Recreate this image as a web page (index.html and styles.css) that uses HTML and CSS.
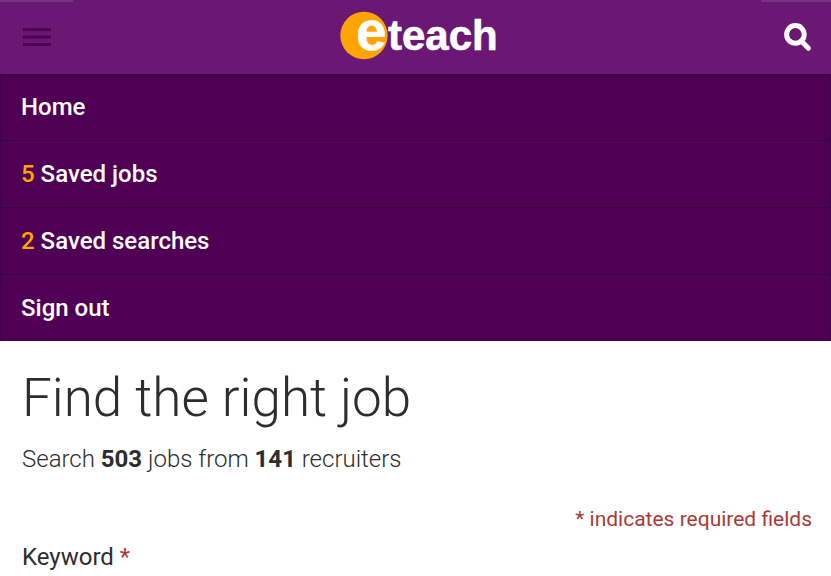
FILE: index.html
```html
<!DOCTYPE html>
<html lang="en">
<head>
<meta charset="utf-8">
<meta name="viewport" content="width=device-width, initial-scale=1">
<title>eteach</title>
<link rel="stylesheet" href="styles.css">
</head>
<body>
<header class="topbar">
  <button class="icon-button" type="button" aria-label="Menu" aria-expanded="true">
    <svg class="menu-icon" width="28" height="18" viewBox="0 0 28 18" aria-hidden="true">
      <path d="M0 1.5h28M0 9h28M0 16.5h28"/>
    </svg>
  </button>
  <a class="logo" href="#" aria-label="eteach">
    <svg width="162" height="74" viewBox="0 0 162 74" aria-hidden="true">
      <circle cx="27" cy="35.5" r="23.7"/>
      <text class="logo-e" x="19" y="50">e</text>
      <text class="logo-rest" x="51" y="50">teach</text>
    </svg>
  </a>
  <button class="icon-button" type="button" aria-label="Search">
    <svg class="search-icon" width="28" height="29" viewBox="0 0 28 29" aria-hidden="true">
      <circle cx="11.4" cy="11.4" r="8.8"/>
      <path d="M17.6 18.2l6.8 7"/>
    </svg>
  </button>
</header>
<nav class="menu">
  <ul>
    <li><a href="#">Home</a></li>
    <li><a href="#"><span class="count">5</span> Saved jobs</a></li>
    <li><a href="#"><span class="count">2</span> Saved searches</a></li>
    <li><a href="#">Sign out</a></li>
  </ul>
</nav>
<main class="content">
  <h1>Find the right job</h1>
  <p class="summary">Search <strong>503</strong> jobs from <strong>141</strong> recruiters</p>
  <form>
    <p class="required-note">* indicates required fields</p>
    <label for="keyword">Keyword <span class="required">*</span></label>
    <input id="keyword" type="text" required>
  </form>
</main>
</body>
</html>
```
FILE: styles.css
```css
* {
  box-sizing: border-box;
}

body {
  margin: 0;
  background: #fff;
  color: #2d2d2d;
  font-family: Roboto, "Liberation Sans", sans-serif;
  font-size: 24px;
  line-height: 32px;
}

.topbar {
  display: flex;
  align-items: center;
  justify-content: space-between;
  height: 74px;
  padding: 0 19px 0 23px;
  background:
    linear-gradient(#7a3384, #7a3384) left top / 73px 2px no-repeat,
    linear-gradient(#7a3384, #7a3384) right top / 70px 2px no-repeat,
    #6b1874;
}

.icon-button {
  display: flex;
  padding: 0;
  border: 0;
  background: none;
}

.menu-icon {
  fill: none;
  stroke: #4c0052;
  stroke-width: 3;
}

.search-icon {
  fill: none;
  stroke: #fff;
  stroke-width: 5;
  stroke-linecap: round;
}

.logo {
  display: flex;
}

.logo circle {
  fill: #ffa400;
}

.logo text {
  fill: #fff;
  stroke: #fff;
  stroke-width: 0.6;
  stroke-linejoin: round;
  font-family: "Liberation Sans", sans-serif;
  font-weight: 700;
  line-height: 1;
}

.logo-e {
  font-size: 55px;
}

.logo-rest {
  font-size: 42px;
}

.menu {
  background: #4f0054;
  box-shadow: inset 0 2px 3px #3a003f, inset 0 -1px 2px #3a003f;
}

.menu ul {
  margin: 0;
  padding: 0;
  list-style: none;
}

.menu li + li {
  border-top: 1px solid #3a0041;
}

.menu a {
  display: block;
  padding: 17px 21px;
  color: #fff;
  font-weight: 500;
  text-decoration: none;
}

.menu .count {
  color: #ffa400;
}

.content {
  padding: 24px 19px 24px 22px;
}

h1 {
  margin: 0;
  font-size: 53px;
  font-weight: 300;
  line-height: 66px;
}

.summary {
  margin: 12px 0 28px;
  font-weight: 300;
}

.summary strong {
  font-weight: 700;
}

.required-note {
  margin: 0 0 6px;
  color: #a93a36;
  font-size: 21px;
  text-align: right;
}

label,
input {
  display: block;
}

.required {
  color: #a93a36;
}

input {
  width: 100%;
  margin-top: 8px;
  padding: 8px 12px;
  border: 1px solid #bbb;
  font: inherit;
}
```
